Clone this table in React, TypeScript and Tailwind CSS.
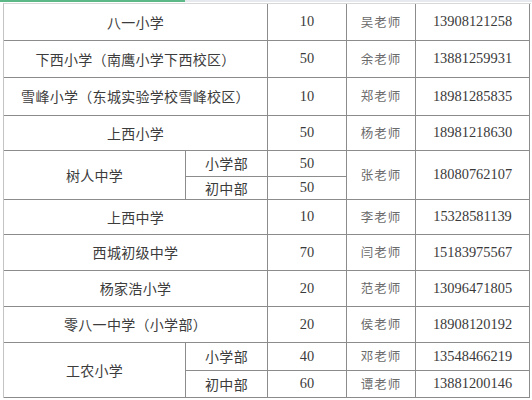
import React from "react";

const cjkFont = "font-['Noto_Sans_CJK_SC','Noto_Sans',sans-serif]";
const serifFont = "font-['Liberation_Serif','Noto_Sans_CJK_SC',serif]";

const cell = "flex items-center justify-center border-r border-b border-[#8c8c8c]";
const nameCls = `${cjkFont} text-[14px] tracking-[0.3px] text-[#3c3c3c]`;
const numCls = `${serifFont} text-[14.4px] text-[#3a3a3a]`;
const teacherCls = `${cjkFont} text-[12.5px] tracking-[1px] text-[#6a6a6a]`;

type Single = { name: string; count: string; teacher: string; phone: string };

const top: Single[] = [
  { name: "八一小学", count: "10", teacher: "吴老师", phone: "13908121258" },
  { name: "下西小学（南鹰小学下西校区）", count: "50", teacher: "余老师", phone: "13881259931" },
  { name: "雪峰小学（东城实验学校雪峰校区）", count: "10", teacher: "郑老师", phone: "18981285835" },
  { name: "上西小学", count: "50", teacher: "杨老师", phone: "18981218630" },
];

const middle: Single[] = [
  { name: "上西中学", count: "10", teacher: "李老师", phone: "15328581139" },
  { name: "西城初级中学", count: "70", teacher: "闫老师", phone: "15183975567" },
  { name: "杨家浩小学", count: "20", teacher: "范老师", phone: "13096471805" },
  { name: "零八一中学（小学部）", count: "20", teacher: "侯老师", phone: "18908120192" },
];

function SingleRow({ r }: { r: Single }) {
  return (
    <>
      <div className={`${cell} col-span-2`}>
        <span className={nameCls}>{r.name}</span>
      </div>
      <div className={cell}>
        <span className={numCls}>{r.count}</span>
      </div>
      <div className={cell}>
        <span className={teacherCls}>{r.teacher}</span>
      </div>
      <div className={cell}>
        <span className={numCls}>{r.phone}</span>
      </div>
    </>
  );
}

export default function App() {
  return (
    <div className="w-[532px] h-[400px] bg-white overflow-hidden">
      <div className="h-[3px] flex">
        <div className="w-[185px] h-[2px] bg-[#5db888]" />
        <div className="flex-1 h-[2px] bg-[#e6eaee]" />
      </div>
      <div className="pl-[3px]">
        <div className="grid grid-cols-[182px_82px_79px_69px_114px] grid-rows-[37px_37px_38px_35px_26px_23px_35px_36px_36px_36px_28px_27px] w-[527px] border-l border-t border-l-[#c4c4c4] border-t-[#d8d8d8] box-content">
          {top.map((r) => (
            <SingleRow key={r.name} r={r} />
          ))}

          <div className={`${cell} row-span-2`}>
            <span className={nameCls}>树人中学</span>
          </div>
          <div className={cell}>
            <span className={nameCls}>小学部</span>
          </div>
          <div className={cell}>
            <span className={numCls}>50</span>
          </div>
          <div className={`${cell} row-span-2`}>
            <span className={teacherCls}>张老师</span>
          </div>
          <div className={`${cell} row-span-2`}>
            <span className={numCls}>18080762107</span>
          </div>
          <div className={cell}>
            <span className={nameCls}>初中部</span>
          </div>
          <div className={cell}>
            <span className={numCls}>50</span>
          </div>

          {middle.map((r) => (
            <SingleRow key={r.name} r={r} />
          ))}

          <div className={`${cell} row-span-2`}>
            <span className={nameCls}>工农小学</span>
          </div>
          <div className={cell}>
            <span className={nameCls}>小学部</span>
          </div>
          <div className={cell}>
            <span className={numCls}>40</span>
          </div>
          <div className={cell}>
            <span className={teacherCls}>邓老师</span>
          </div>
          <div className={cell}>
            <span className={numCls}>13548466219</span>
          </div>
          <div className={cell}>
            <span className={nameCls}>初中部</span>
          </div>
          <div className={cell}>
            <span className={numCls}>60</span>
          </div>
          <div className={cell}>
            <span className={teacherCls}>谭老师</span>
          </div>
          <div className={cell}>
            <span className={numCls}>13881200146</span>
          </div>
        </div>
      </div>
    </div>
  );
}
